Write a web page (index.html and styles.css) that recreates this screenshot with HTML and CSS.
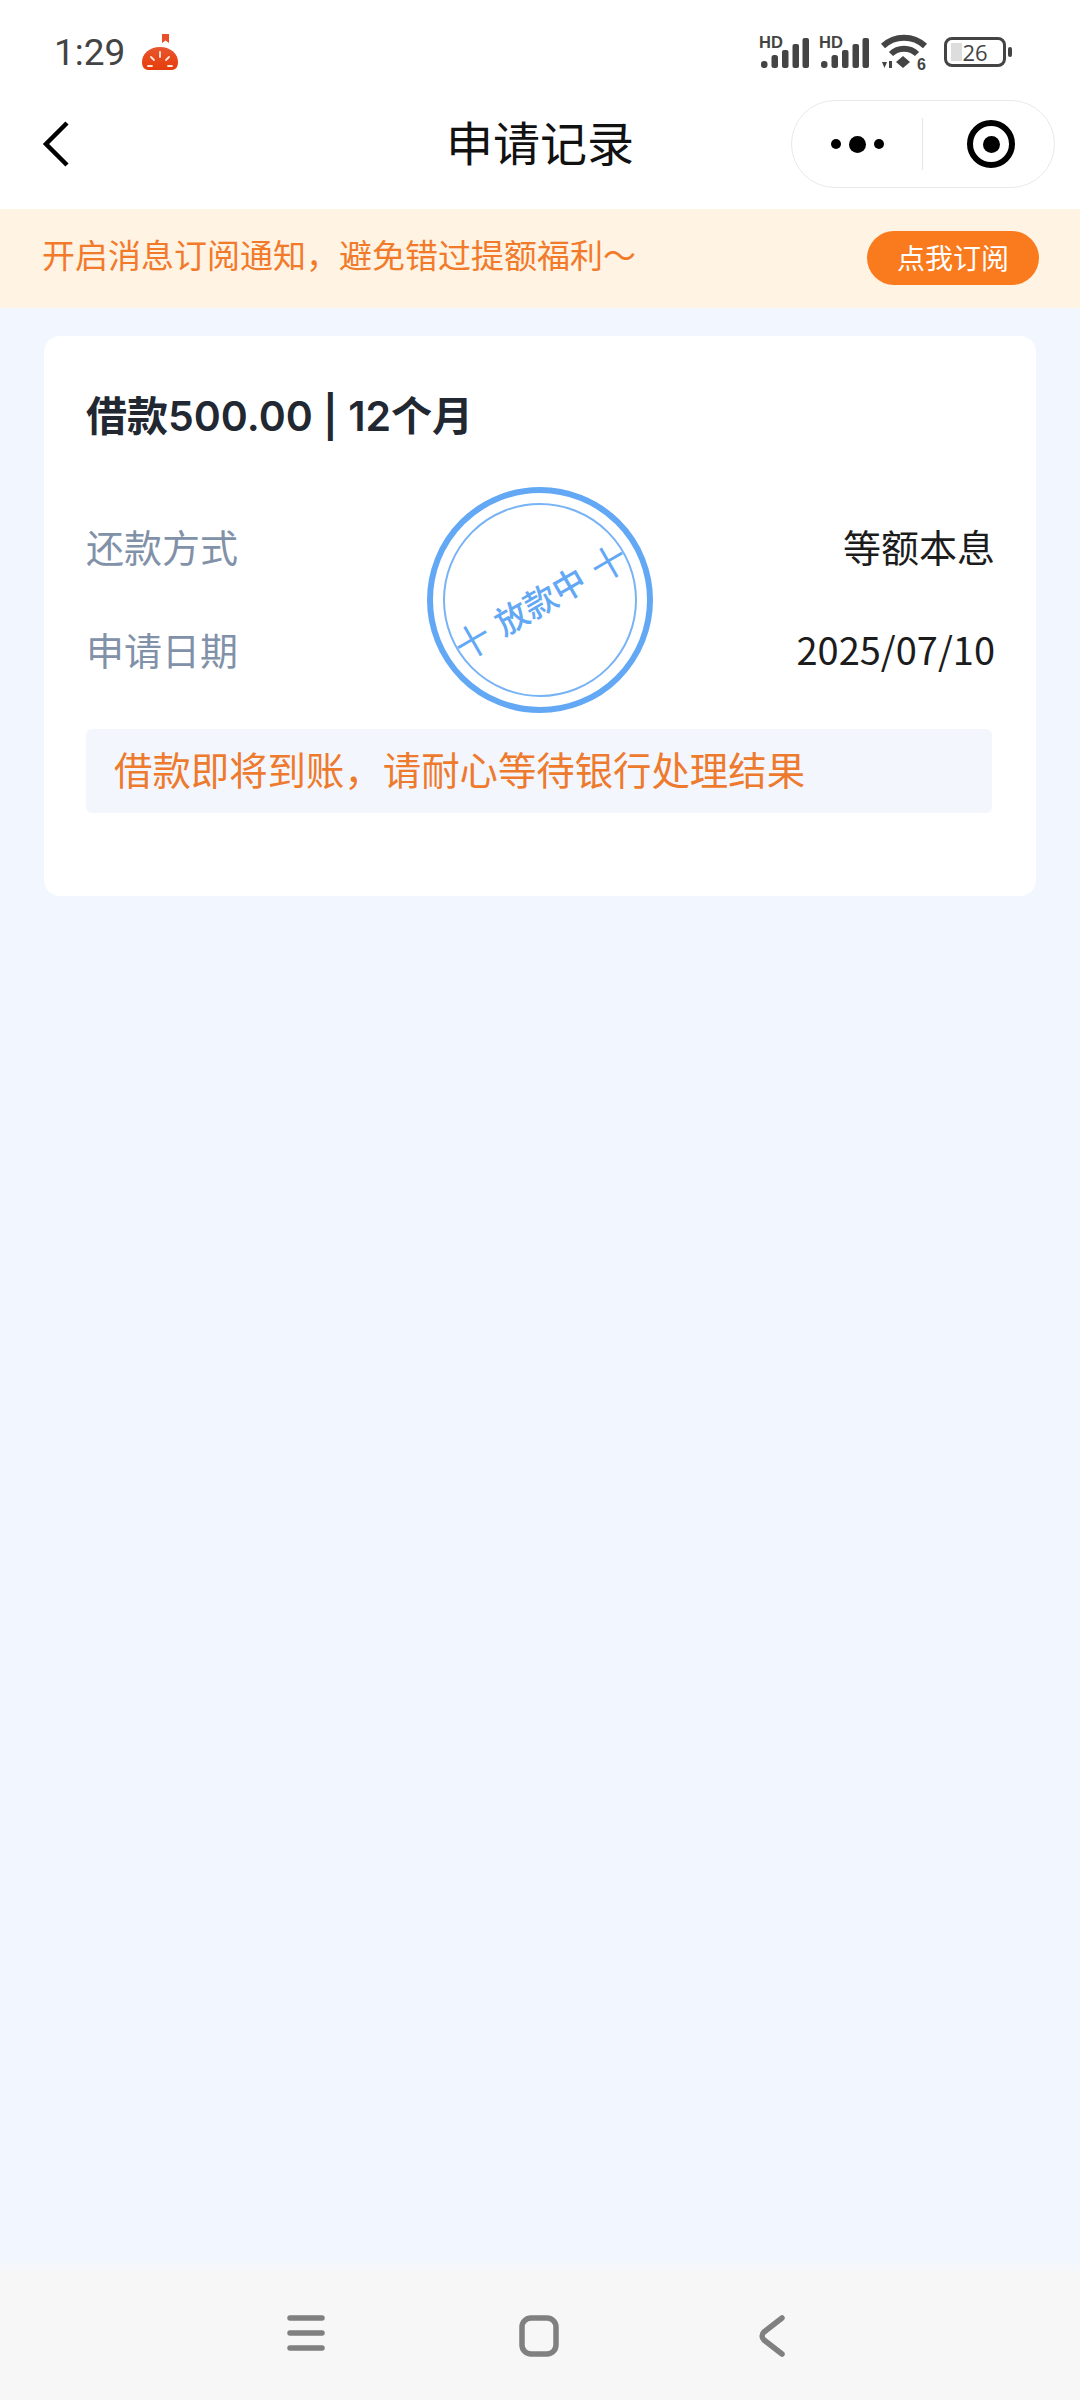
FILE: index.html
```html
<!DOCTYPE html>
<html lang="zh-CN">
<head>
    <meta charset="UTF-8">
    <meta name="viewport" content="width=device-width, initial-scale=1.0">
    <title>申请记录</title>
    <link rel="stylesheet" href="styles.css">
</head>
<body>
    <div class="page">
        <!-- 状态栏 -->
        <div class="statusBar">
            <div class="statusLeft">
                <span class="statusTime">1:29</span>
                <svg class="appBadge" width="40" height="40" viewBox="0 0 40 40">
                    <defs>
                        <linearGradient id="tomato" x1="0" y1="0" x2="0" y2="1">
                            <stop offset="0" stop-color="#e8562e"/>
                            <stop offset="1" stop-color="#e63c0c"/>
                        </linearGradient>
                    </defs>
                    <path d="M22 1h7v9l-3.500-2.500L22 10z" fill="#e8502a"/>
                    <path d="M20 14c11 0 18 7 18 15 0 6-3 8-7 8H9c-4 0-7-2-7-8 0-8 7-15 18-15z" fill="url(#tomato)"/>
                    <path d="M20 19v5M11 24l3 3M29 24l-3 3M8 33h4M28 33h4" stroke="#ffe9dc" stroke-width="1.800" stroke-linecap="round" fill="none"/>
                </svg>
            </div>
            <div class="statusRight">
                <svg class="signal" width="52" height="38" viewBox="0 -4 52 38">
                    <text x="0" y="13" class="hdText">HD</text>
                    <rect x="2" y="26" width="6.500" height="7" rx="3" fill="#444"/>
                    <rect x="12.500" y="20" width="6.500" height="13" rx="2.500" fill="#444"/>
                    <rect x="23" y="15" width="6.500" height="18" rx="2" fill="#444"/>
                    <rect x="33.500" y="9" width="6.500" height="24" rx="2" fill="#444"/>
                    <rect x="43.500" y="3" width="6.500" height="30" rx="2" fill="#444"/>
                </svg>
                <svg class="signal" width="52" height="38" viewBox="0 -4 52 38">
                    <text x="0" y="13" class="hdText">HD</text>
                    <rect x="2" y="26" width="6.500" height="7" rx="3" fill="#444"/>
                    <rect x="12.500" y="20" width="6.500" height="13" rx="2.500" fill="#444"/>
                    <rect x="23" y="15" width="6.500" height="18" rx="2" fill="#444"/>
                    <rect x="33.500" y="9" width="6.500" height="24" rx="2" fill="#444"/>
                    <rect x="43.500" y="3" width="6.500" height="30" rx="2" fill="#444"/>
                </svg>
                <svg class="wifi" width="48" height="42" viewBox="0 0 48 42">
                    <path d="M2 13C14 2 32 2 44 13" stroke="#444" stroke-width="6" fill="none"/>
                    <path d="M10 21C17 14 29 14 36 21" stroke="#444" stroke-width="6" fill="none"/>
                    <path d="M22 23l7 6-7 6-7-6z" fill="#444"/>
                    <path d="M1 29h5l-2.500 6zM8 28h3v7H8z" fill="#444"/>
                    <text x="36" y="37" class="wifiSix">6</text>
                </svg>
                <div class="battery">
                    <div class="batteryBody">
                        <span class="batteryFill"></span>
                        <span class="batteryNum">26</span>
                    </div>
                    <span class="batteryCap"></span>
                </div>
            </div>
        </div>

        <!-- 标题栏 -->
        <div class="navBar">
            <svg class="navBack" width="30" height="50" viewBox="0 0 30 50">
                <path d="M25 4L4 25l21 21" stroke="#000" stroke-width="4.500" fill="none"/>
            </svg>
            <div class="navTitle">申请记录</div>
            <div class="capsule">
                <div class="capsuleMore">
                    <span class="dot"></span>
                    <span class="dot dotBig"></span>
                    <span class="dot"></span>
                </div>
                <span class="capsuleLine"></span>
                <div class="capsuleClose">
                    <span class="closeRing"></span>
                </div>
            </div>
        </div>

        <!-- 订阅提示 -->
        <div class="notifyBar">
            <span class="notifyText">开启消息订阅通知，避免错过提额福利～</span>
            <span class="notifyBtn">点我订阅</span>
        </div>

        <div class="content">
            <div class="recordCard">
                <div class="recordTitle">借款500.00 | 12个月</div>
                <div class="recordRow">
                    <span class="rowLabel">还款方式</span>
                    <span class="rowValue">等额本息</span>
                </div>
                <div class="recordRow">
                    <span class="rowLabel">申请日期</span>
                    <span class="rowValue">2025/07/10</span>
                </div>
                <div class="recordTip">借款即将到账，请耐心等待银行处理结果</div>

                <div class="stamp">
                    <div class="stampInner">
                        <div class="stampText">
                            <span class="stampCross">十</span>
                            <span class="stampWord">放款中</span>
                            <span class="stampCross">十</span>
                        </div>
                    </div>
                </div>
            </div>
        </div>

        <!-- 系统导航 -->
        <div class="sysNav">
            <svg width="38" height="36" viewBox="0 0 38 36">
                <path d="M3 3h32M3 18h32M3 33h32" stroke="#808080" stroke-width="5.500" stroke-linecap="round"/>
            </svg>
            <svg class="sysHome" width="40" height="42" viewBox="0 0 40 42">
                <rect x="3" y="3" width="34" height="36" rx="9" stroke="#808080" stroke-width="5.500" fill="none"/>
            </svg>
            <svg width="26" height="42" viewBox="0 0 26 42">
                <path d="M23 3L5 17c-2.500 2-2.500 6 0 8L23 39" stroke="#808080" stroke-width="5.500" stroke-linecap="round" fill="none"/>
            </svg>
        </div>
    </div>
</body>
</html>
```

FILE: styles.css
```css
* {
    box-sizing: border-box;
}

body {
    margin: 0;
    background-color: #f2f6fe;
    font-family: "Noto Sans CJK SC", "Noto Sans", sans-serif;
}

.page {
    width: 1080px;
    height: 2400px;
    display: flex;
    flex-direction: column;
}

/* Status bar */
.statusBar {
    height: 95px;
    padding: 31px 68px 0 54px;
    display: flex;
    justify-content: space-between;
    align-items: flex-start;
    background-color: #fff;
}

.statusLeft {
    display: flex;
    align-items: center;
    gap: 15px;
}

.statusTime {
    font-family: Roboto, sans-serif;
    font-size: 37px;
    line-height: 44px;
    color: #444;
}

.statusRight {
    display: flex;
    align-items: flex-start;
}

.signal {
    margin-right: 8px;
}

.hdText {
    font-family: "Liberation Sans", sans-serif;
    font-size: 16.500px;
    font-weight: bold;
    fill: #444;
}

.wifiSix {
    font-family: "Liberation Sans", sans-serif;
    font-size: 16px;
    font-weight: bold;
    fill: #444;
}

.wifi {
    margin: 2px 15px 0 2px;
}

.battery {
    display: flex;
    align-items: center;
    gap: 2px;
    margin-top: 6px;
}

.batteryBody {
    width: 62px;
    height: 30px;
    border: 3px solid #444;
    border-radius: 8px;
    position: relative;
    display: flex;
    align-items: center;
    justify-content: center;
}

.batteryFill {
    position: absolute;
    left: 4px;
    top: 3px;
    bottom: 3px;
    width: 11px;
    background-color: #ddd;
}

.batteryNum {
    position: relative;
    font-family: "Open Sans", sans-serif;
    font-size: 22px;
    line-height: 24px;
    color: #444;
}

.batteryCap {
    width: 4px;
    height: 10px;
    border-radius: 2px;
    background-color: #444;
}

/* Nav bar */
.navBar {
    height: 114px;
    padding: 5px 25px 0 42px;
    display: flex;
    align-items: flex-start;
    justify-content: space-between;
    background-color: #fff;
    position: relative;
}

.navBack {
    margin-top: 19px;
}

.navTitle {
    position: absolute;
    left: 0;
    right: 0;
    top: 13px;
    text-align: center;
    font-size: 47px;
    line-height: 66px;
    color: #111;
}

.capsule {
    width: 264px;
    height: 88px;
    border: 1px solid #e9e9e9;
    border-radius: 44px;
    display: flex;
    align-items: center;
    background-color: #fff;
}

.capsuleMore {
    width: 130px;
    display: flex;
    align-items: center;
    justify-content: center;
    gap: 8px;
}

.dot {
    width: 10px;
    height: 10px;
    border-radius: 50%;
    background-color: #000;
}

.dotBig {
    width: 17px;
    height: 17px;
}

.capsuleLine {
    width: 1px;
    height: 52px;
    background-color: #e6e6e6;
}

.capsuleClose {
    flex: 1;
    padding-left: 5px;
    display: flex;
    align-items: center;
    justify-content: center;
}

.closeRing {
    width: 48px;
    height: 48px;
    border: 6px solid #000;
    border-radius: 50%;
    display: flex;
    align-items: center;
    justify-content: center;
}

.closeRing::after {
    content: "";
    width: 17px;
    height: 17px;
    border-radius: 50%;
    background-color: #000;
}

/* Notify */
.notifyBar {
    height: 99px;
    padding: 0 41px 0 42px;
    display: flex;
    align-items: center;
    justify-content: space-between;
    background-color: #fff3e3;
}

.notifyText {
    font-size: 33px;
    line-height: 48px;
    margin-top: -10px;
    color: #f27a2b;
}

.notifyBtn {
    width: 172px;
    height: 54px;
    margin-top: -1px;
    border-radius: 27px;
    background-color: #fa7a1e;
    color: #fff;
    font-size: 28px;
    line-height: 52px;
    text-align: center;
}

/* Card */
.content {
    flex: 1;
    padding: 28px 44px 0;
}

.recordCard {
    height: 560px;
    padding: 53px 41px 0 42px;
    border-radius: 16px;
    background-color: #fff;
    position: relative;
}

.recordTitle {
    font-family: Inter, "Noto Sans CJK SC", sans-serif;
    font-size: 41px;
    line-height: 54px;
    font-weight: 600;
    color: #222832;
    margin-bottom: 75px;
}

.recordRow {
    height: 103px;
    display: flex;
    justify-content: space-between;
    font-size: 38px;
    line-height: 56px;
}

.recordRow + .recordRow {
    height: 78px;
}

.rowLabel {
    color: #8191a8;
}

.rowValue {
    color: #1c1c1c;
}

.recordTip {
    width: 906px;
    height: 84px;
    margin-top: 30px;
    padding-left: 28px;
    border-radius: 6px;
    background-color: #f3f6fc;
    font-size: 38.400px;
    line-height: 79px;
    color: #ee7a2e;
    white-space: nowrap;
}

.stamp {
    position: absolute;
    left: 383px;
    top: 151px;
    width: 226px;
    height: 226px;
    border: 6px solid #63a8f5;
    border-radius: 50%;
    display: flex;
    align-items: center;
    justify-content: center;
}

.stampInner {
    width: 194px;
    height: 194px;
    border: 2px solid #78b3f5;
    border-radius: 50%;
    display: flex;
    align-items: center;
    justify-content: center;
}

.stampText {
    display: flex;
    align-items: center;
    gap: 11px;
    transform: rotate(-30deg);
    white-space: nowrap;
    color: #63a8f5;
}

.stampWord {
    font-size: 33px;
    line-height: 40px;
    font-weight: 500;
}

.stampCross {
    font-size: 36px;
    line-height: 40px;
    font-weight: 400;
}

/* System nav: top edge fades from the page colour */
.sysNav {
    height: 140px;
    padding: 55px 295px 0 287px;
    display: flex;
    align-items: flex-start;
    justify-content: space-between;
    background: linear-gradient(#f2f6fe, #f7f7f7 16px);
}

.sysHome {
    margin-right: 6px;
}
```
